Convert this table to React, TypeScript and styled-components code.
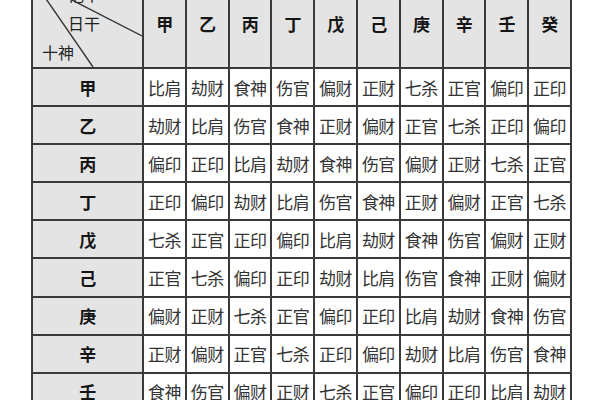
import styled, { createGlobalStyle } from "styled-components";

const GlobalStyle = createGlobalStyle`
  html, body {
    margin: 0;
    padding: 0;
    background: #ffffff;
  }
  body {
    font-family: "Noto Sans CJK SC", "Noto Sans", sans-serif;
  }
`;

const Frame = styled.div`
  width: 600px;
  height: 400px;
  overflow: hidden;
  padding-left: 31px;
  box-sizing: border-box;
`;

const Grid = styled.div`
  display: grid;
  grid-template-columns: 109px repeat(10, 40.8px);
  grid-template-rows: 87px repeat(10, 36.1px);
  gap: 2px;
  padding: 2px;
  width: max-content;
  margin-top: -22px;
  background: #3a3a3a;
`;

const Cell = styled.div<{ $head?: boolean }>`
  display: flex;
  align-items: center;
  justify-content: center;
  background: ${(p) => (p.$head ? "#e4e4e4" : "#ffffff")};
  color: ${(p) => (p.$head ? "#151515" : "#333333")};
  font-size: 17px;
  font-weight: ${(p) => (p.$head ? 700 : 400)};
  line-height: 1;
  white-space: nowrap;
  letter-spacing: -0.5px;
`;

const Corner = styled.div`
  position: relative;
  display: flex;
  flex-direction: column;
  background: #e4e4e4;
  padding-top: 6px;
  gap: 12px;
  box-sizing: border-box;
  overflow: hidden;
`;

const CornerLabel = styled.span<{ $indent: number }>`
  margin-left: ${(p) => p.$indent}px;
  font-size: 16px;
  line-height: 17px;
  color: #222;
`;

const Diagonals = styled.svg`
  position: absolute;
  left: 0;
  top: 0;
  width: 109px;
  height: 87px;
`;

const stems = ["甲", "乙", "丙", "丁", "戊", "己", "庚", "辛", "壬", "癸"];

const rows: string[][] = [
  ["比肩", "劫财", "食神", "伤官", "偏财", "正财", "七杀", "正官", "偏印", "正印"],
  ["劫财", "比肩", "伤官", "食神", "正财", "偏财", "正官", "七杀", "正印", "偏印"],
  ["偏印", "正印", "比肩", "劫财", "食神", "伤官", "偏财", "正财", "七杀", "正官"],
  ["正印", "偏印", "劫财", "比肩", "伤官", "食神", "正财", "偏财", "正官", "七杀"],
  ["七杀", "正官", "正印", "偏印", "比肩", "劫财", "食神", "伤官", "偏财", "正财"],
  ["正官", "七杀", "偏印", "正印", "劫财", "比肩", "伤官", "食神", "正财", "偏财"],
  ["偏财", "正财", "七杀", "正官", "偏印", "正印", "比肩", "劫财", "食神", "伤官"],
  ["正财", "偏财", "正官", "七杀", "正印", "偏印", "劫财", "比肩", "伤官", "食神"],
  ["食神", "伤官", "偏财", "正财", "七杀", "正官", "偏印", "正印", "比肩", "劫财"],
  ["伤官", "食神", "正财", "偏财", "正官", "七杀", "正印", "偏印", "劫财", "比肩"],
];

const App = () => {
  return (
    <Frame>
      <GlobalStyle />
      <Grid>
        <Corner>
          <CornerLabel $indent={35}>他干</CornerLabel>
          <CornerLabel $indent={35}>日干</CornerLabel>
          <CornerLabel $indent={9}>十神</CornerLabel>
          <Diagonals viewBox="0 0 109 87">
            <line x1="0" y1="0" x2="109" y2="56" stroke="#333" strokeWidth="1.4" />
            <line x1="0" y1="0" x2="60" y2="87" stroke="#333" strokeWidth="1.4" />
          </Diagonals>
        </Corner>
        {stems.map((s) => (
          <Cell $head key={"h" + s}>
            {s}
          </Cell>
        ))}
        {rows.map((row, i) => [
          <Cell $head key={"r" + i}>
            {stems[i]}
          </Cell>,
          ...row.map((v, j) => <Cell key={i + "-" + j}>{v}</Cell>),
        ])}
      </Grid>
    </Frame>
  );
};

export default App;
